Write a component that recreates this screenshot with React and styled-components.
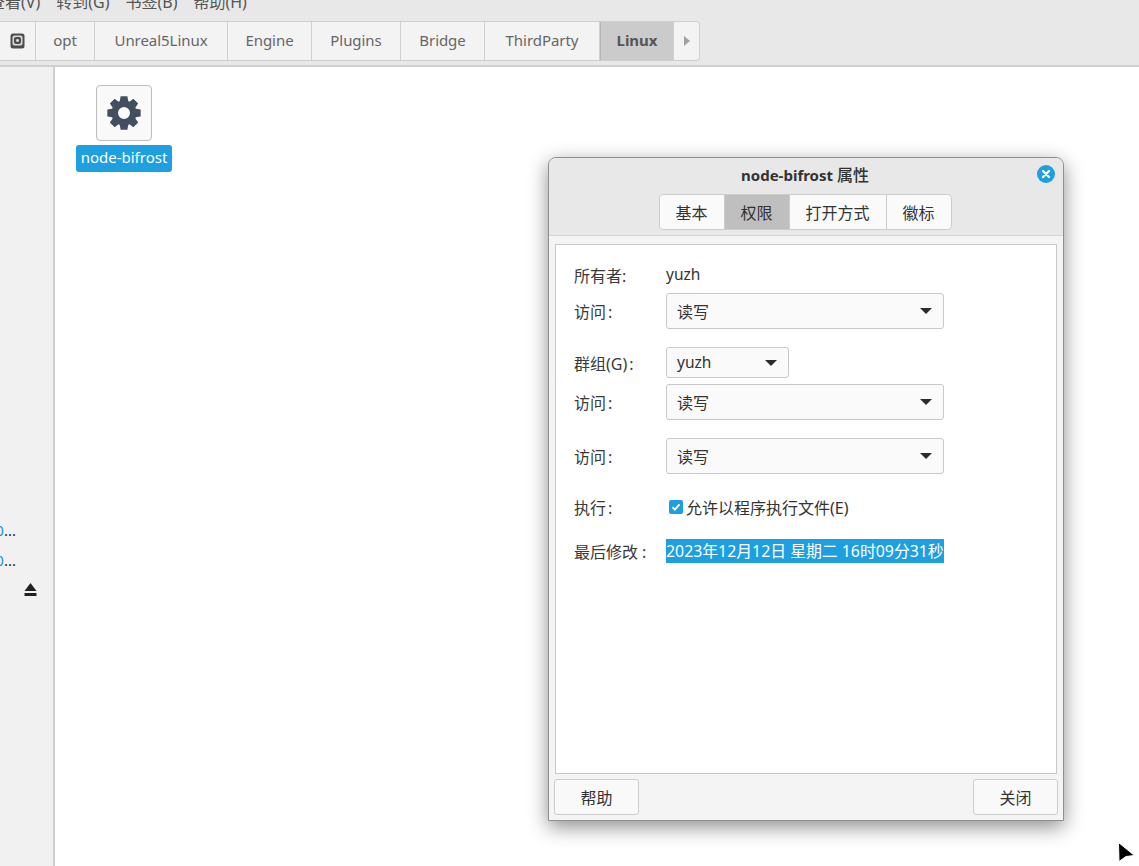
import React from 'react';
import styled, { createGlobalStyle } from 'styled-components';

const FONT = `"Noto Sans", "Noto Sans CJK SC", sans-serif`;

const GlobalStyle = createGlobalStyle`
  html, body {
    margin: 0;
    padding: 0;
    background: #fff;
  }
  * {
    box-sizing: border-box;
  }
`;

const Screen = styled.div`
  position: relative;
  width: 1139px;
  height: 866px;
  overflow: hidden;
  background: #fff;
  color: #3d3d3d;
  font-family: ${FONT};
  font-size: 15px;
`;

const Toolbar = styled.div`
  height: 67px;
  background: #e8e8e8;
  border-bottom: 2px solid #d0d0d0;
`;

const MenuBar = styled.div`
  display: flex;
  height: 21px;
  overflow: hidden;
  margin-left: -11px;
  gap: 16px;
  color: #555;
  line-height: 20px;
  font-size: 16px;
`;

const MenuItem = styled.span`
  margin-top: -8px;
  white-space: nowrap;
`;

const PathBar = styled.div`
  display: flex;
  width: 700px;
  height: 40px;
  background: #f3f3f3;
  border: 1px solid #cfcfcf;
  border-left: 0;
  border-radius: 0 4px 4px 0;
`;

const HomeCrumb = styled.div`
  width: 36px;
  display: flex;
  align-items: center;
  justify-content: center;
  border-right: 1px solid #cfcfcf;
`;

const Crumb = styled.div`
  width: ${(p) => p.$w}px;
  display: flex;
  align-items: center;
  justify-content: center;
  padding-bottom: 3px;
  border-right: 1px solid #cfcfcf;
  color: ${(p) => (p.$active ? '#555' : '#666')};
  background: ${(p) => (p.$active ? '#cbcbcb' : 'transparent')};
  font-weight: ${(p) => (p.$active ? 700 : 400)};
  border-left: ${(p) => (p.$active ? '1px solid #b5b5b5' : '0')};
  white-space: nowrap;
  font-size: 15px;
  letter-spacing: -0.05px;
`;

const PathArrow = styled.div`
  flex: 1;
  display: flex;
  align-items: center;
  justify-content: center;
`;

const Main = styled.div`
  display: flex;
  height: 799px;
`;

const Sidebar = styled.div`
  width: 55px;
  background: #f1f1f1;
  border-right: 2px solid #cfcfcf;
  padding-top: 451px;
  display: flex;
  flex-direction: column;
  align-items: flex-end;
`;

const SideText = styled.div`
  height: 30px;
  line-height: 24px;
  padding-right: 37px;
  color: #2a2a2a;
  white-space: nowrap;
`;

const SideGlyph = styled.span`
  color: #1d8fd0;
`;

const EjectWrap = styled.div`
  margin-top: 3px;
  padding-right: 16px;
  height: 16px;
`;

const FileArea = styled.div`
  flex: 1;
  padding: 18px 0 0 21px;
`;

const FileItem = styled.div`
  width: 96px;
  display: flex;
  flex-direction: column;
  align-items: center;
  gap: 4px;
`;

const FileIcon = styled.div`
  width: 56px;
  height: 56px;
  display: flex;
  align-items: center;
  justify-content: center;
  background: #f9f9f9;
  border: 1px solid #bdbdbd;
  border-radius: 4px;
`;

const FileName = styled.div`
  width: 96px;
  height: 27px;
  line-height: 24px;
  text-align: center;
  background: #1d9fe0;
  color: #fff;
  border-radius: 3px;
  font-size: 15px;
`;

const Dialog = styled.div`
  position: absolute;
  left: 548px;
  top: 157px;
  width: 516px;
  height: 664px;
  display: flex;
  flex-direction: column;
  background: #f4f4f4;
  border: 1px solid #8f8f8f;
  border-radius: 8px 8px 0 0;
  box-shadow: 0 6px 20px rgba(0, 0, 0, 0.45);
  color: #333;
`;

const DialogHeader = styled.div`
  position: relative;
  height: 78px;
  display: flex;
  flex-direction: column;
  align-items: center;
  background: #e8e8e8;
  border-bottom: 1px solid #d4d4d4;
  border-radius: 7px 7px 0 0;
`;

const DialogTitle = styled.div`
  height: 36px;
  line-height: 34px;
  font-weight: 700;
  font-size: 15px;
  margin-right: 2px;
`;

const TitleCjk = styled.span`
  font-size: 16px;
  font-weight: 500;
`;

const CloseButton = styled.div`
  position: absolute;
  right: 8px;
  top: 7px;
  width: 18px;
  height: 18px;
`;

const Tabs = styled.div`
  display: flex;
  height: 36px;
  margin-right: 2px;
  background: #fafafa;
  border: 1px solid #cdcdcd;
  border-radius: 4px;
`;

const Tab = styled.div`
  width: ${(p) => p.$w}px;
  display: flex;
  align-items: center;
  justify-content: center;
  font-size: 16px;
  background: ${(p) => (p.$active ? '#bfbfbf' : 'transparent')};
  border-right: ${(p) => (p.$last ? '0' : '1px solid #cdcdcd')};
`;

const DialogBody = styled.div`
  flex: 1;
  display: flex;
  flex-direction: column;
  padding: 8px 6px 4px 6px;
`;

const Frame = styled.div`
  height: 530px;
  background: #fff;
  border: 1px solid #c8c8c8;
  padding: 19px 0 0 18px;
`;

const Row = styled.div`
  display: flex;
  align-items: center;
  margin-top: ${(p) => p.$top || 0}px;
  height: ${(p) => p.$h || 22}px;
`;

const Label = styled.div`
  width: 92px;
  font-size: 16px;
  color: #3a3a3a;
`;

const Colon = styled.span`
  margin-left: ${(p) => p.$gap || 2}px;
`;

const Value = styled.div`
  font-size: 15.5px;
  padding-bottom: 3px;
`;

const Select = styled.div`
  width: ${(p) => p.$w}px;
  height: ${(p) => p.$h}px;
  display: flex;
  align-items: center;
  justify-content: space-between;
  padding: 0 11px 0 ${(p) => p.$pad}px;
  background: #fafafa;
  border: 1px solid #c8c8c8;
  border-radius: 3px;
  font-size: ${(p) => p.$fs || 16}px;
`;

const SelectText = styled.span`
  padding-bottom: ${(p) => p.$up || 0}px;
`;

const Caret = styled.span`
  width: 0;
  height: 0;
  border-left: 6px solid transparent;
  border-right: 6px solid transparent;
  border-top: 6px solid #2b2b2b;
`;

const CheckRow = styled.div`
  display: flex;
  align-items: center;
  gap: 3px;
  padding-left: 3px;
  font-size: 16px;
  white-space: nowrap;
`;

const CheckBox = styled.span`
  width: 14px;
  height: 14px;
  display: flex;
  align-items: center;
  justify-content: center;
  background: #1d9fe0;
  border-radius: 2px;
`;

const Selected = styled.div`
  width: 278px;
  height: 24px;
  line-height: 24px;
  background: #1d9fe0;
  color: #fff;
  white-space: nowrap;
  overflow: hidden;
  font-size: 15.85px;
`;

const Footer = styled.div`
  display: flex;
  justify-content: space-between;
  margin: 5px -1px 0 -1px;
`;

const Button = styled.div`
  width: 85px;
  height: 36px;
  display: flex;
  align-items: center;
  justify-content: center;
  background: #f9f9f9;
  border: 1px solid #cdcdcd;
  border-radius: 3px;
  font-size: 16px;
`;

const Cursor = styled.svg`
  position: absolute;
  left: 1117px;
  top: 841px;
`;

function gearPath() {
  // 8 teeth, outer r 17, root r 12.5, hole handled with evenodd
  const pts = [];
  for (let i = 0; i < 8; i++) {
    const a = (i * Math.PI) / 4;
    const step = [
      [-0.34, 12.6],
      [-0.2, 17],
      [0.2, 17],
      [0.34, 12.6],
    ];
    step.forEach(([d, r]) => {
      const x = 18 + r * Math.sin(a + d);
      const y = 18 - r * Math.cos(a + d);
      pts.push(`${x.toFixed(2)} ${y.toFixed(2)}`);
    });
  }
  return `M${pts.join('L')}Z M18 12a6 6 0 1 0 0 12a6 6 0 1 0 0-12Z`;
}

function GearIcon() {
  return (
    <svg width="36" height="36" viewBox="0 0 36 36">
      <path d={gearPath()} fill="#434f60" fillRule="evenodd" />
    </svg>
  );
}

function HomeIcon() {
  return (
    <svg width="15" height="16" viewBox="0 0 15 16">
      <rect x="0.5" y="0.5" width="14" height="15" rx="2.5" fill="#4d4d4d" />
      <rect x="2.5" y="2.5" width="10" height="10" rx="2" fill="#d8d8d8" />
      <rect x="4" y="4" width="7" height="7" rx="2" fill="#4d4d4d" />
      <circle cx="7.5" cy="7.5" r="1.4" fill="#e8e8e8" />
    </svg>
  );
}

const crumbs = [
  ['opt', 59],
  ['Unreal5Linux', 133],
  ['Engine', 84],
  ['Plugins', 89],
  ['Bridge', 84],
  ['ThirdParty', 115],
];

export default function App() {
  return (
    <Screen>
      <GlobalStyle />
      <Toolbar>
        <MenuBar>
          <MenuItem>查看(V)</MenuItem>
          <MenuItem>转到(G)</MenuItem>
          <MenuItem>书签(B)</MenuItem>
          <MenuItem>帮助(H)</MenuItem>
        </MenuBar>
        <PathBar>
          <HomeCrumb>
            <HomeIcon />
          </HomeCrumb>
          {crumbs.map(([name, w]) => (
            <Crumb key={name} $w={w}>
              {name}
            </Crumb>
          ))}
          <Crumb $w={74} $active>
            Linux
          </Crumb>
          <PathArrow>
            <svg width="8" height="12" viewBox="0 0 8 12">
              <path d="M1 1l6 5-6 5z" fill="#a0a0a0" />
            </svg>
          </PathArrow>
        </PathBar>
      </Toolbar>

      <Main>
        <Sidebar>
          <SideText>
            <SideGlyph>0</SideGlyph>...
          </SideText>
          <SideText>
            <SideGlyph>0</SideGlyph>...
          </SideText>
          <EjectWrap>
            <svg width="13" height="15" viewBox="0 0 13 15">
              <path d="M6.5 1L12.5 9H.5z M.5 11h12v3H.5z" fill="#222" />
            </svg>
          </EjectWrap>
        </Sidebar>
        <FileArea>
          <FileItem>
            <FileIcon>
              <GearIcon />
            </FileIcon>
            <FileName>node-bifrost</FileName>
          </FileItem>
        </FileArea>
      </Main>

      <Dialog>
        <DialogHeader>
          <DialogTitle>
            node-bifrost <TitleCjk>属性</TitleCjk>
          </DialogTitle>
          <CloseButton>
            <svg width="18" height="18" viewBox="0 0 18 18">
              <circle cx="9" cy="9" r="9" fill="#1d9fe0" />
              <path d="M6 6l6 6M12 6l-6 6" stroke="#fff" strokeWidth="2.4" strokeLinecap="round" />
            </svg>
          </CloseButton>
          <Tabs>
            <Tab $w={65}>基本</Tab>
            <Tab $w={65} $active>
              权限
            </Tab>
            <Tab $w={97}>打开方式</Tab>
            <Tab $w={64} $last>
              徽标
            </Tab>
          </Tabs>
        </DialogHeader>
        <DialogBody>
          <Frame>
            <Row>
              <Label>所有者:</Label>
              <Value>yuzh</Value>
            </Row>
            <Row $top={7} $h={36}>
              <Label>
                访问<Colon>:</Colon>
              </Label>
              <Select $w={278} $h={36} $pad={10}>
                读写
                <Caret />
              </Select>
            </Row>
            <Row $top={18} $h={31}>
              <Label>
                群组(G)<Colon>:</Colon>
              </Label>
              <Select $w={123} $h={31} $pad={10} $fs={15.5}>
                <SelectText $up={2}>yuzh</SelectText>
                <Caret />
              </Select>
            </Row>
            <Row $top={6} $h={36}>
              <Label>
                访问<Colon>:</Colon>
              </Label>
              <Select $w={278} $h={36} $pad={10}>
                读写
                <Caret />
              </Select>
            </Row>
            <Row $top={18} $h={36}>
              <Label>
                访问<Colon>:</Colon>
              </Label>
              <Select $w={278} $h={36} $pad={10}>
                读写
                <Caret />
              </Select>
            </Row>
            <Row $top={22}>
              <Label>
                执行<Colon>:</Colon>
              </Label>
              <CheckRow>
                <CheckBox>
                  <svg width="10" height="10" viewBox="0 0 10 10">
                    <path d="M1.5 5.2l2.4 2.4L8.5 2.4" fill="none" stroke="#fff" strokeWidth="1.8" />
                  </svg>
                </CheckBox>
                允许以程序执行文件(E)
              </CheckRow>
            </Row>
            <Row $top={22}>
              <Label>
                最后修改<Colon $gap={4}>:</Colon>
              </Label>
              <Selected>2023年12月12日 星期二 16时09分31秒</Selected>
            </Row>
          </Frame>
          <Footer>
            <Button>帮助</Button>
            <Button>关闭</Button>
          </Footer>
        </DialogBody>
      </Dialog>

      <Cursor width="20" height="22" viewBox="0 0 20 22">
        <path d="M1.5 1.5L17.5 14.5L9 15.5L2 20.5Z" fill="#000" stroke="#fff" strokeWidth="1" />
      </Cursor>
    </Screen>
  );
}
